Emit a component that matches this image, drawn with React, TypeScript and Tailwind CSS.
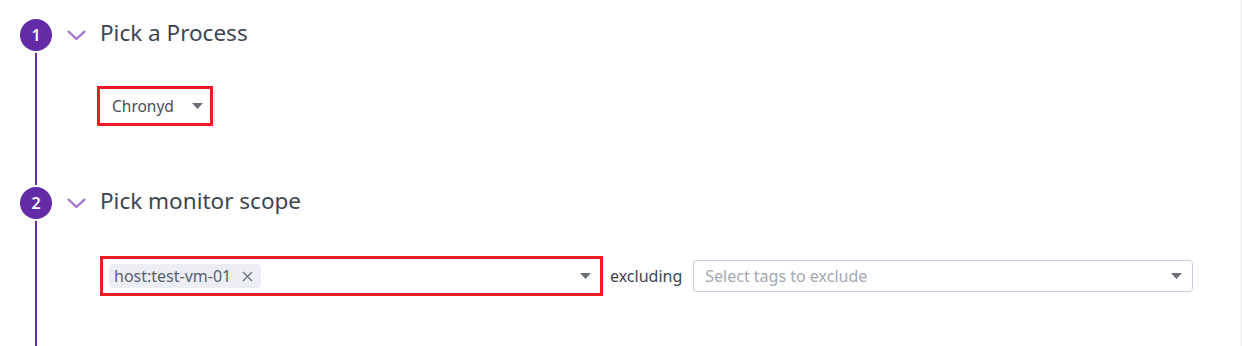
import React from "react";

const Caret = ({ className = "" }: { className?: string }) => (
  <svg width="11" height="6" viewBox="0 0 11 6" className={className}>
    <polygon points="0,0 11,0 5.5,6" fill="#6b6f7a" />
  </svg>
);

const Chevron = () => (
  <svg width="19" height="11" viewBox="0 0 19 11" className="shrink-0">
    <polyline points="1.5,1.5 9.5,9 17.5,1.5" fill="none" stroke="#9b6bd3" strokeWidth="2" strokeLinecap="round" strokeLinejoin="round" />
  </svg>
);

const Step = ({
  n,
  title,
  children,
  className = "",
}: {
  n: number;
  title: string;
  children: React.ReactNode;
  className?: string;
}) => (
  <div className={`flex ${className}`}>
    <div className="flex w-8 flex-col items-center">
      <div className="flex h-8 w-8 items-center justify-center rounded-full bg-[#632ca6] text-[16px] font-semibold text-white">
        {n}
      </div>
      <div className="my-[2px] w-[2px] flex-1 bg-[#632ca6]" />
    </div>
    <div className="ml-[15px] flex flex-1 flex-col">
      <div className="flex h-8 items-center">
        <Chevron />
        <span className="mb-[5px] ml-[14px] text-[22.5px] leading-8 text-[#3d4650]">{title}</span>
      </div>
      {children}
    </div>
  </div>
);

export default function App() {
  return (
    <div
      className="h-[346px] w-[1242px] overflow-hidden border-r border-[#ececec] bg-white pl-5 pt-[19px]"
      style={{ fontFamily: '"Noto Sans", "Open Sans", sans-serif' }}
    >
      <Step n={1} title="Pick a Process" className="h-[168px]">
        <div className="ml-[30px] mt-[35px] flex items-center">
          <div className="flex h-10 w-[116px] items-center border-[3px] border-[#ec1c24] pl-[12px] pr-[4px]">
            <span className="mt-[2px] text-[15.5px] text-[#474d58]">Chronyd</span>
            <Caret className="ml-auto mr-[3px]" />
          </div>
          <div className="ml-[1px] h-[32px] w-px bg-[#dcdbe8]" />
        </div>
      </Step>
      <Step n={2} title="Pick monitor scope" className="h-[200px]">
        <div className="ml-[33px] mt-[37px] flex items-center">
          <div className="flex h-10 w-[503px] items-center border-[3px] border-[#ec1c24] pl-[6px] pr-[9px]">
            <div className="flex h-6 items-center rounded-[4px] bg-[#eceef4] pl-[5px] pr-[8px]">
              <span className="text-[16px] text-[#5a606c]">host:test-vm-01</span>
              <svg width="11" height="11" viewBox="0 0 11 11" className="ml-[11px]">
                <path d="M1 1 L10 10 M10 1 L1 10" stroke="#6a6f7a" strokeWidth="1.3" />
              </svg>
            </div>
            <Caret className="ml-auto" />
          </div>
          <span className="ml-[7px] text-[16px] text-[#3f4550]">excluding</span>
          <div className="ml-[11px] flex h-8 w-[500px] items-center rounded-[4px] border border-[#c9cce0] pl-[11px] pr-[10px]">
            <span className="text-[16px] text-[#a3a8b2]">Select tags to exclude</span>
            <Caret className="ml-auto" />
          </div>
        </div>
      </Step>
    </div>
  );
}
